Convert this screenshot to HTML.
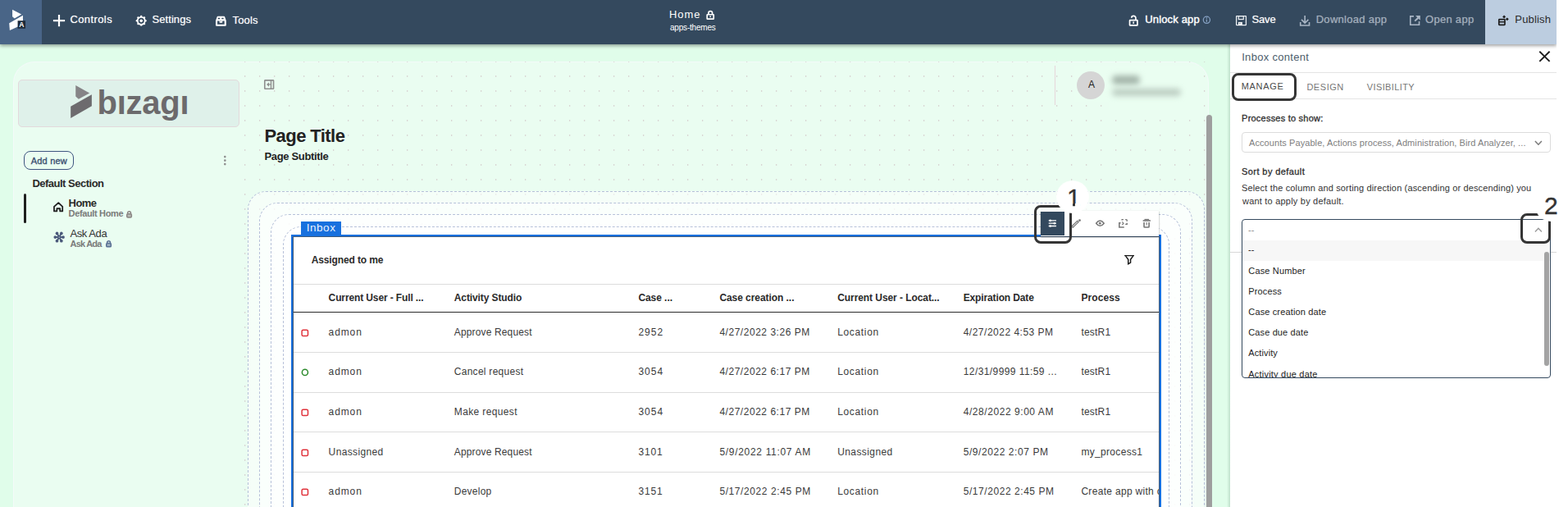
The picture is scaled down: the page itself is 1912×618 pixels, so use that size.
<!DOCTYPE html>
<html lang="en">
<head>
<meta charset="utf-8">
<title>Bizagi Apps Designer - Inbox content</title>
<style>
html,body{margin:0;padding:0;width:1912px;height:618px;overflow:hidden;background:#fff}
body{position:relative;font-family:"Liberation Sans",sans-serif;color:#333}
#root{position:absolute;left:0;top:0;width:1912px;height:618px;overflow:hidden;background:#fff}
.t{position:absolute;white-space:pre;margin:0;padding:0;font-weight:400}
.a{position:absolute}
.g{position:absolute;left:0;top:0;width:0;height:0}
svg{position:absolute;overflow:visible}
#work{position:absolute;left:0;top:54px;width:1500px;height:564px;background:#e0fdea}
#canvas{position:absolute;left:16px;top:75px;width:1458px;height:600px;box-sizing:border-box;border:1px solid rgba(250,246,255,.6);border-radius:26px;background:rgba(255,255,255,.32)}
#dots{position:absolute;left:294px;top:75px}
.db{position:absolute;box-sizing:border-box;border:1px dashed #b6c1d9;border-radius:22px;background:rgba(255,255,255,.5);height:500px}
#logo{position:absolute;left:22px;top:97px;width:270px;height:58px;box-sizing:border-box;border:1px solid #e3d9dc;border-radius:5px;background:#dff1ea}
#nav{position:absolute;left:0;top:0;width:1898px;height:54px;background:#34495e;box-shadow:0 2px 4px rgba(0,0,0,.36)}
#navlogo{position:absolute;left:0;top:0;width:51px;height:54px;background:#496587}
#publish{position:absolute;left:1811px;top:0;width:87px;height:54px;background:#bccde0}
#panel{position:absolute;left:1500px;top:54px;width:398px;height:564px;background:#fff}
#pshadow{position:absolute;left:1496px;top:54px;width:4px;height:564px;background:linear-gradient(90deg,rgba(60,110,80,0),rgba(60,110,80,.2))}
#clip{position:absolute;left:0;top:0;width:1898px;height:70px;overflow:hidden;pointer-events:none}
.hl{position:absolute;box-sizing:border-box;border:3.4px solid #353535;border-radius:8px}
.halo{position:absolute;border-radius:50%;background:radial-gradient(circle,#fff 0,#fff 66%,rgba(255,255,255,0) 100%)}
.line{position:absolute;height:1px;background:#ddd}
</style>
</head>
<body>
<div id="root">

<div id="work"></div>
<div id="canvas"></div>
<svg id="dots" width="1179" height="543" aria-hidden="true"><defs><pattern id="dp" x="-4" y="-9" width="18" height="18" patternUnits="userSpaceOnUse"><rect x="8" y="8.3" width="1.3" height="1.3" fill="#c2a3ac" fill-opacity=".66"/></pattern></defs><rect width="1179" height="543" fill="url(#dp)"/></svg>

<!-- ======================= sidebar ======================= -->
<aside class="g" aria-label="App navigation">
<div id="logo"></div>
<svg style="left:80px;top:98px" width="160" height="56" viewBox="0 0 1766 618"><path d="M135 65 322 170 175 252 135 216z" fill="#868487"/><path d="M352 190V346L68 507V350z" fill="#6d6b6e"/></svg>
<span class="t" style="left:118.5px;top:101px;font-size:40px;line-height:48px;font-weight:700;color:#6c6a6c;letter-spacing:-0.24px;">bizagi</span>
<div class="a" style="left:144px;top:106px;width:9px;height:9px;background:#dff1ea"></div><div class="a" style="left:220px;top:106px;width:10px;height:9px;background:#dff1ea"></div>
<div class="a" style="left:29px;top:184px;width:61px;height:23px;box-sizing:border-box;border:1px solid #3e5580;border-radius:8px"></div>
<svg style="left:272px;top:189px" width="5" height="13" viewBox="0 0 5 13"><circle cx="2.3" cy="2.1" r="1.3" fill="#8c8c8c"/><circle cx="2.3" cy="6.6" r="1.3" fill="#8c8c8c"/><circle cx="2.3" cy="11.1" r="1.3" fill="#8c8c8c"/></svg>
<svg style="left:56px;top:240px" width="30" height="25" viewBox="0 0 742 618"><path d="M378 176 247 292V430H330V352H425V430H500V292z" fill="none" stroke="#1f1f1f" stroke-width="44" stroke-linejoin="round"/></svg>
<svg style="left:154.1px;top:256.5px" width="7.1" height="8.7" viewBox="0 0 7.1 8.7"><path d="M1.63 3.65V2.67A1.92 1.92 0 0 1 5.47 2.67V3.65" fill="none" stroke="#8a8583" stroke-width="1.5"/><rect x="0.75" y="3.65" width="5.6" height="4.30" rx="1.2" fill="#8a8583" fill-opacity=".55" stroke="#8a8583" stroke-width="1.5"/></svg>
<svg style="left:129px;top:293.4px" width="7.1" height="8.6" viewBox="0 0 7.1 8.6"><path d="M1.63 3.61V2.67A1.92 1.92 0 0 1 5.47 2.67V3.61" fill="none" stroke="#586f93" stroke-width="1.5"/><rect x="0.75" y="3.61" width="5.6" height="4.24" rx="1.2" fill="#586f93" fill-opacity=".55" stroke="#586f93" stroke-width="1.5"/></svg>
<svg style="left:56px;top:277px" width="30" height="25" viewBox="0 0 742 618"><path d="M400 298L520 298" stroke="#4b5a7b" stroke-width="50"/><circle cx="520" cy="298" r="46" fill="#4b5a7b"/><path d="M400 298L466 412" stroke="#4b5a7b" stroke-width="50"/><circle cx="466" cy="412" r="46" fill="#4b5a7b"/><path d="M400 298L334 412" stroke="#4b5a7b" stroke-width="50"/><circle cx="334" cy="412" r="46" fill="#4b5a7b"/><path d="M400 298L280 298" stroke="#4b5a7b" stroke-width="50"/><circle cx="280" cy="298" r="46" fill="#4b5a7b"/><path d="M400 298L334 184" stroke="#4b5a7b" stroke-width="50"/><circle cx="334" cy="184" r="46" fill="#4b5a7b"/><path d="M400 298L466 184" stroke="#4b5a7b" stroke-width="50"/><circle cx="466" cy="184" r="46" fill="#4b5a7b"/><circle cx="400" cy="298" r="16" fill="#e4f5ee"/></svg>
<div class="a" style="left:29px;top:236px;width:3px;height:36px;background:#1f1f1f;border-radius:2px"></div>
<span class="t" style="left:37.7px;top:190px;font-size:11px;line-height:13px;color:#3a4f70;letter-spacing:0.22px;-webkit-text-stroke:0.35px #3a4f70;">Add new</span>
<span class="t" style="left:39.4px;top:216px;font-size:13px;line-height:16px;font-weight:700;color:#2a2a2a;letter-spacing:-0.5px;">Default Section</span>
<span class="t" style="left:83.6px;top:240px;font-size:13px;line-height:16px;font-weight:700;color:#2a2a2a;letter-spacing:-0.6px;">Home</span>
<span class="t" style="left:83.6px;top:254px;font-size:11px;line-height:13px;font-weight:700;color:#7a7a7a;letter-spacing:-0.36px;">Default Home</span>
<span class="t" style="left:85.5px;top:277px;font-size:13px;line-height:16px;letter-spacing:-0.43px;">Ask Ada</span>
<span class="t" style="left:85.5px;top:291px;font-size:11px;line-height:13px;font-weight:700;color:#7a7a7a;letter-spacing:-0.78px;">Ask Ada</span>
</aside>

<!-- ======================= main canvas ======================= -->
<main class="g">
<svg style="left:313px;top:90px" width="30" height="25" viewBox="0 0 742 618"><rect x="242" y="195" width="266" height="255" rx="14" fill="none" stroke="#8f8f8f" stroke-width="40"/><path d="M432 195V450" stroke="#8f8f8f" stroke-width="36"/><path d="M298 320 372 252V388z" fill="#8f8f8f"/><path d="M360 320H420" stroke="#8f8f8f" stroke-width="30"/></svg>
<div class="a" style="left:1310px;top:80px;width:153px;height:44px;background:#eafef1"></div><div class="a" style="left:1352px;top:120px;width:111px;height:14px;background:#eafef1"></div>
<div class="a" style="left:1286px;top:80px;width:1px;height:48px;background:#e6d6da"></div>
<div class="a" style="left:1313px;top:87px;width:34px;height:34px;border-radius:50%;background:#d5d5d5"></div>
<div class="a" style="left:1356px;top:91.5px;width:34px;height:11px;border-radius:5px;background:#a4b5aa;filter:blur(3.5px)"></div>
<div class="a" style="left:1356px;top:108px;width:84px;height:9px;border-radius:5px;background:#bccdc2;filter:blur(3.5px)"></div>

<div class="db" style="left:302px;top:233px;width:1167px"></div>
<div class="db" style="left:316px;top:247px;width:1138px"></div>
<div class="db" style="left:330px;top:261px;width:1110px"></div>
<div class="db" style="left:345px;top:276px;width:1081px"></div>

<section class="g" aria-label="Inbox">
<div class="a" style="left:355px;top:286px;width:1061px;height:400px;box-sizing:border-box;border:2px solid #1870de;background:#fff"></div>
<div class="a" style="left:357px;top:288px;width:1057px;height:400px;box-sizing:border-box;border:1px solid #3f5a7a"></div>
<div class="a" style="left:367px;top:270px;width:49px;height:17px;background:#1870de"></div>
<div class="a" style="left:0;top:0;width:1413px;height:618px;overflow:hidden">
<div class="line" style="left:358px;top:346px;width:1055px;background:#dcdcdc"></div>
<div class="line" style="left:358px;top:380px;width:1055px;background:#2b2b2b"></div>
<div class="line" style="left:358px;top:429px;width:1055px"></div>
<div class="line" style="left:358px;top:478px;width:1055px"></div>
<div class="line" style="left:358px;top:526px;width:1055px"></div>
<div class="line" style="left:358px;top:575px;width:1055px"></div>
<svg style="left:1362px;top:304px" width="30" height="25" viewBox="0 0 742 618"><path d="M225 188H520" stroke="#161616" stroke-width="30"/><path d="M262 200 340 305V440L410 400V305L486 200" fill="none" stroke="#161616" stroke-width="36" stroke-linejoin="miter"/></svg>
<svg style="left:367.2px;top:400.7px" width="10" height="10" viewBox="0 0 10 10"><rect x="1.1" y="1.2" width="7.4" height="7.3" rx="1.6" fill="none" stroke="#e0333c" stroke-width="1.5"/></svg>
<svg style="left:367.2px;top:449.3px" width="10" height="10" viewBox="0 0 10 10"><circle cx="4.9" cy="4.9" r="3.55" fill="none" stroke="#2c8a2c" stroke-width="1.5"/></svg>
<svg style="left:367.2px;top:497.8px" width="10" height="10" viewBox="0 0 10 10"><rect x="1.1" y="1.2" width="7.4" height="7.3" rx="1.6" fill="none" stroke="#e0333c" stroke-width="1.5"/></svg>
<svg style="left:367.2px;top:546.8px" width="10" height="10" viewBox="0 0 10 10"><rect x="1.1" y="1.2" width="7.4" height="7.3" rx="1.6" fill="none" stroke="#e0333c" stroke-width="1.5"/></svg>
<svg style="left:367.2px;top:595.2px" width="10" height="10" viewBox="0 0 10 10"><rect x="1.1" y="1.2" width="7.4" height="7.3" rx="1.6" fill="none" stroke="#e0333c" stroke-width="1.5"/></svg>
<span class="t" style="left:379.7px;top:310px;font-size:12px;line-height:14px;font-weight:700;color:#2a2a2a;letter-spacing:-0.12px;">Assigned to me</span>
<span class="t" style="left:400.6px;top:356px;font-size:12px;line-height:14px;font-weight:700;color:#2a2a2a;letter-spacing:-0.12px;">Current User - Full ...</span>
<span class="t" style="left:553.8px;top:356px;font-size:12px;line-height:14px;font-weight:700;color:#2a2a2a;letter-spacing:-0.11px;">Activity Studio</span>
<span class="t" style="left:778.4px;top:356px;font-size:12px;line-height:14px;font-weight:700;color:#2a2a2a;letter-spacing:-0.06px;">Case ...</span>
<span class="t" style="left:877.4px;top:356px;font-size:12px;line-height:14px;font-weight:700;color:#2a2a2a;letter-spacing:-0.06px;">Case creation ...</span>
<span class="t" style="left:1021.2px;top:356px;font-size:12px;line-height:14px;font-weight:700;color:#2a2a2a;letter-spacing:-0.07px;">Current User - Locat...</span>
<span class="t" style="left:1174.7px;top:356px;font-size:12px;line-height:14px;font-weight:700;color:#2a2a2a;letter-spacing:-0.13px;">Expiration Date</span>
<span class="t" style="left:1318.4px;top:356px;font-size:12px;line-height:14px;font-weight:700;color:#2a2a2a;letter-spacing:0.1px;">Process</span>
<span class="t" style="left:400.6px;top:398px;font-size:12px;line-height:14px;color:#3a3a3a;letter-spacing:0.88px;">admon</span>
<span class="t" style="left:553.8px;top:398px;font-size:12px;line-height:14px;color:#3a3a3a;letter-spacing:0.14px;">Approve Request</span>
<span class="t" style="left:778.4px;top:398px;font-size:12px;line-height:14px;color:#3a3a3a;letter-spacing:1.0px;">2952</span>
<span class="t" style="left:877.4px;top:398px;font-size:12px;line-height:14px;color:#3a3a3a;letter-spacing:0.53px;">4/27/2022 3:26 PM</span>
<span class="t" style="left:1021.2px;top:398px;font-size:12px;line-height:14px;color:#3a3a3a;letter-spacing:0.66px;">Location</span>
<span class="t" style="left:1174.7px;top:398px;font-size:12px;line-height:14px;color:#3a3a3a;letter-spacing:0.5px;">4/27/2022 4:53 PM</span>
<span class="t" style="left:1318.4px;top:398px;font-size:12px;line-height:14px;color:#3a3a3a;letter-spacing:0.2px;">testR1</span>
<span class="t" style="left:400.6px;top:446px;font-size:12px;line-height:14px;color:#3a3a3a;letter-spacing:0.88px;">admon</span>
<span class="t" style="left:553.8px;top:446px;font-size:12px;line-height:14px;color:#3a3a3a;letter-spacing:0.27px;">Cancel request</span>
<span class="t" style="left:778.4px;top:446px;font-size:12px;line-height:14px;color:#3a3a3a;letter-spacing:1.0px;">3054</span>
<span class="t" style="left:877.4px;top:446px;font-size:12px;line-height:14px;color:#3a3a3a;letter-spacing:0.53px;">4/27/2022 6:17 PM</span>
<span class="t" style="left:1021.2px;top:446px;font-size:12px;line-height:14px;color:#3a3a3a;letter-spacing:0.66px;">Location</span>
<span class="t" style="left:1174.7px;top:446px;font-size:12px;line-height:14px;color:#3a3a3a;letter-spacing:0.42px;">12/31/9999 11:59 ...</span>
<span class="t" style="left:1318.4px;top:446px;font-size:12px;line-height:14px;color:#3a3a3a;letter-spacing:0.2px;">testR1</span>
<span class="t" style="left:400.6px;top:495px;font-size:12px;line-height:14px;color:#3a3a3a;letter-spacing:0.88px;">admon</span>
<span class="t" style="left:553.8px;top:495px;font-size:12px;line-height:14px;color:#3a3a3a;letter-spacing:0.36px;">Make request</span>
<span class="t" style="left:778.4px;top:495px;font-size:12px;line-height:14px;color:#3a3a3a;letter-spacing:1.0px;">3054</span>
<span class="t" style="left:877.4px;top:495px;font-size:12px;line-height:14px;color:#3a3a3a;letter-spacing:0.53px;">4/27/2022 6:17 PM</span>
<span class="t" style="left:1021.2px;top:495px;font-size:12px;line-height:14px;color:#3a3a3a;letter-spacing:0.66px;">Location</span>
<span class="t" style="left:1174.7px;top:495px;font-size:12px;line-height:14px;color:#3a3a3a;letter-spacing:0.56px;">4/28/2022 9:00 AM</span>
<span class="t" style="left:1318.4px;top:495px;font-size:12px;line-height:14px;color:#3a3a3a;letter-spacing:0.2px;">testR1</span>
<span class="t" style="left:400.6px;top:544px;font-size:12px;line-height:14px;color:#3a3a3a;letter-spacing:0.37px;">Unassigned</span>
<span class="t" style="left:553.8px;top:544px;font-size:12px;line-height:14px;color:#3a3a3a;letter-spacing:0.14px;">Approve Request</span>
<span class="t" style="left:778.4px;top:544px;font-size:12px;line-height:14px;color:#3a3a3a;letter-spacing:0.87px;">3101</span>
<span class="t" style="left:877.4px;top:544px;font-size:12px;line-height:14px;color:#3a3a3a;letter-spacing:0.69px;">5/9/2022 11:07 AM</span>
<span class="t" style="left:1021.2px;top:544px;font-size:12px;line-height:14px;color:#3a3a3a;letter-spacing:0.41px;">Unassigned</span>
<span class="t" style="left:1174.7px;top:544px;font-size:12px;line-height:14px;color:#3a3a3a;letter-spacing:0.57px;">5/9/2022 2:07 PM</span>
<span class="t" style="left:1318.4px;top:544px;font-size:12px;line-height:14px;color:#3a3a3a;letter-spacing:0.32px;">my_process1</span>
<span class="t" style="left:400.6px;top:592px;font-size:12px;line-height:14px;color:#3a3a3a;letter-spacing:0.88px;">admon</span>
<span class="t" style="left:553.8px;top:592px;font-size:12px;line-height:14px;color:#3a3a3a;letter-spacing:0.23px;">Develop</span>
<span class="t" style="left:778.4px;top:592px;font-size:12px;line-height:14px;color:#3a3a3a;letter-spacing:0.87px;">3151</span>
<span class="t" style="left:877.4px;top:592px;font-size:12px;line-height:14px;color:#3a3a3a;letter-spacing:0.59px;">5/17/2022 2:45 PM</span>
<span class="t" style="left:1021.2px;top:592px;font-size:12px;line-height:14px;color:#3a3a3a;letter-spacing:0.66px;">Location</span>
<span class="t" style="left:1174.7px;top:592px;font-size:12px;line-height:14px;color:#3a3a3a;letter-spacing:0.56px;">5/17/2022 2:45 PM</span>
<span class="t" style="left:1318.4px;top:592px;font-size:12px;line-height:14px;color:#3a3a3a;letter-spacing:0.31px;">Create app with c</span>
</div>
</section>

<!-- widget toolbar -->
<div class="a" style="left:1269px;top:257px;width:144px;height:31px;background:#fff;box-shadow:0 1px 2px rgba(0,0,0,.42)"></div>
<div class="a" style="left:1269px;top:258px;width:29px;height:29px;background:#34495e"></div>
<svg style="left:1270px;top:258px" width="30" height="25" viewBox="0 0 742 618"><path d="M215 270H445M215 350H445M215 432H445" stroke="#fff" stroke-width="34"/><circle cx="265" cy="268" r="32" fill="#fff"/><circle cx="392" cy="352" r="32" fill="#fff"/><circle cx="265" cy="434" r="32" fill="#fff"/></svg>
<svg style="left:1300px;top:258px" width="60" height="25" viewBox="0 0 1483 618"><path d="M202 479 168 445 341 278 375 312z" fill="#fff" stroke="#777" stroke-width="30" stroke-linejoin="round"/><circle cx="408" cy="262" r="36" fill="#777"/><path d="M905 350Q1022 198 1142 350Q1022 502 905 350z" fill="none" stroke="#777" stroke-width="38" stroke-linejoin="round"/><circle cx="1020" cy="350" r="36" fill="#777"/></svg>
<svg style="left:1356px;top:258px" width="60" height="25" viewBox="0 0 1483 618"><path d="M262 340H218V468H365" fill="none" stroke="#777" stroke-width="38"/><path d="M300 262V238H345M400 238H430Q450 238 450 258V290M450 340V380H400" fill="none" stroke="#777" stroke-width="36"/><path d="M305 305 345 350 305 398" fill="none" stroke="#777" stroke-width="30"/><path d="M930 272H1160" stroke="#777" stroke-width="40"/><path d="M975 236H1115" stroke="#777" stroke-width="34"/><path d="M965 320V450Q965 470 985 470H1095Q1115 470 1115 450V320" fill="none" stroke="#777" stroke-width="40"/><path d="M1042 322V410" stroke="#777" stroke-width="28"/></svg>
<div class="hl" style="left:1261px;top:250px;width:46px;height:47px"></div>
<div class="halo" style="left:1288px;top:220px;width:40px;height:40px"></div>
<span class="t" style="left:322.5px;top:153px;font-size:22px;line-height:26px;font-weight:700;color:#222;letter-spacing:-0.57px;">Page Title</span>
<span class="t" style="left:322.5px;top:183px;font-size:13px;line-height:16px;font-weight:700;color:#222;letter-spacing:-0.34px;">Page Subtitle</span>
<span class="t" style="left:1326.9px;top:96px;font-size:12px;line-height:14px;color:#222;">A</span>
<span class="t" style="left:373.7px;top:270px;font-size:13.5px;line-height:16px;color:#eaf2fd;letter-spacing:0.55px;">Inbox</span>
<span class="t" style="left:1301.1px;top:223px;font-size:30px;line-height:36px;-webkit-text-stroke:0.35px #333;">1</span>
<div class="a" style="left:1300px;top:248.2px;width:7.9px;height:3.4px;background:#fff"></div><div class="a" style="left:1311.2px;top:248.2px;width:6px;height:3.4px;background:#fff"></div>

<div class="a" style="left:1471px;top:140px;width:7px;height:500px;border-radius:4px;background:#9e9e9e"></div>
</main>

<!-- ======================= right panel ======================= -->
<div id="pshadow"></div>
<aside id="panel"></aside>
<section class="g" aria-label="Inbox content">
<div class="line" style="left:1500px;top:88px;width:398px;background:#e4e4e4"></div>
<div class="line" style="left:1500px;top:120px;width:398px;background:#e4e4e4"></div>
<div class="line" style="left:1500px;top:307px;width:398px;background:#d8d8d8"></div>
<div class="hl" style="left:1502px;top:89px;width:79px;height:34px"></div>
<div class="a" style="left:1514px;top:161px;width:377px;height:25px;box-sizing:border-box;border:1px solid #dcdcdc;border-radius:4px;background:#fff"></div>
<!-- open dropdown -->
<div class="a" style="left:1514px;top:267px;width:377px;height:194px;box-sizing:border-box;border:1px solid #34495e;border-radius:4px;background:#fff"></div>
<div class="a" style="left:1515px;top:293px;width:375px;height:25px;background:#f7f7f7"></div>
<div class="a" style="left:1883px;top:307px;width:6px;height:139px;border-radius:3px;background:#a3a3a3"></div>
<div class="a" style="left:0;top:0;width:1898px;height:460px;overflow:hidden">
<span class="t" style="left:1522.0px;top:274px;font-size:11px;line-height:13px;color:#8a8a8a;">--</span>
<span class="t" style="left:1522.0px;top:298px;font-size:11px;line-height:13px;color:#222;">--</span>
<span class="t" style="left:1522.3px;top:324px;font-size:11px;line-height:13px;color:#222;letter-spacing:0.15px;">Case Number</span>
<span class="t" style="left:1522.3px;top:349px;font-size:11px;line-height:13px;color:#222;letter-spacing:0.12px;">Process</span>
<span class="t" style="left:1522.3px;top:374px;font-size:11px;line-height:13px;color:#222;letter-spacing:0.14px;">Case creation date</span>
<span class="t" style="left:1522.3px;top:399px;font-size:11px;line-height:13px;color:#222;letter-spacing:0.12px;">Case due date</span>
<span class="t" style="left:1522.3px;top:424px;font-size:11px;line-height:13px;color:#222;letter-spacing:0.1px;">Activity</span>
<span class="t" style="left:1522.3px;top:450px;font-size:11px;line-height:13px;color:#222;letter-spacing:0.21px;">Activity due date</span>
</div>
<svg style="left:1876px;top:62px" width="15" height="14" viewBox="0 0 15 14"><path d="M1.3 .8 13.6 12.9M13.6 .8 1.3 12.9" stroke="#1e1e1e" stroke-width="1.9" fill="none"/></svg>
<svg style="left:1870.5px;top:171px" width="10" height="7" viewBox="0 0 10 7"><path d="M.9 1 4.9 5.2 8.9 1" fill="none" stroke="#7a7a7a" stroke-width="1.5"/></svg>
<svg style="left:1870.5px;top:276.5px" width="10" height="7" viewBox="0 0 10 7"><path d="M.9 5.4 4.9 1.3 8.9 5.4" fill="none" stroke="#9a9a9a" stroke-width="1.4"/></svg>
<div class="hl" style="left:1854px;top:260px;width:37px;height:37px"></div>
<div class="halo" style="left:1872px;top:232px;width:38px;height:38px"></div>
<span class="t" style="left:1514.2px;top:62px;font-size:13px;line-height:16px;color:#4d5d6c;letter-spacing:0.3px;">Inbox content</span>
<span class="t" style="left:1513.7px;top:99px;font-size:11px;line-height:13px;color:#4a4a4a;letter-spacing:0.68px;">MANAGE</span>
<span class="t" style="left:1593.4px;top:100px;font-size:11px;line-height:13px;color:#777;letter-spacing:0.54px;">DESIGN</span>
<span class="t" style="left:1666.8px;top:100px;font-size:11px;line-height:13px;color:#777;letter-spacing:0.38px;">VISIBILITY</span>
<span class="t" style="left:1514.1px;top:138px;font-size:11px;line-height:13px;color:#2e2e2e;letter-spacing:0.22px;-webkit-text-stroke:0.3px #2e2e2e;">Processes to show:</span>
<span class="t" style="left:1523.0px;top:168px;font-size:11px;line-height:13px;color:#7e7e7e;letter-spacing:0.08px;">Accounts Payable, Actions process, Administration, Bird Analyzer, ...</span>
<span class="t" style="left:1514.1px;top:203px;font-size:11px;line-height:13px;color:#2e2e2e;letter-spacing:0.41px;-webkit-text-stroke:0.3px #2e2e2e;">Sort by default</span>
<span class="t" style="left:1514.0px;top:223px;font-size:11px;line-height:13px;letter-spacing:0.15px;">Select the column and sorting direction (ascending or descending) you</span>
<span class="t" style="left:1515.0px;top:239px;font-size:11px;line-height:13px;letter-spacing:0.21px;">want to apply by default.</span>
<span class="t" style="left:1882.9px;top:233px;font-size:30px;line-height:36px;-webkit-text-stroke:0.35px #333;">2</span>
</section>

<!-- ======================= top bar ======================= -->
<div id="clip"><header id="nav"><div id="navlogo"></div><div id="publish"></div></header></div>
<nav class="g" aria-label="Designer toolbar">
<svg style="left:5px;top:7px" width="36" height="35" viewBox="0 0 636 618"><path d="M178 85 375 185 225 272 178 235z" fill="#fff"/><path d="M405 208V400L122 530 110 375z" fill="#fff"/><rect x="293" y="322" width="167" height="168" fill="#1d2a39"/><text x="377" y="468" font-family="Liberation Sans,sans-serif" font-size="150" font-weight="700" fill="#fff" text-anchor="middle">A</text></svg>
<svg style="left:64px;top:17px" width="16" height="16" viewBox="0 0 16 16"><path d="M.9 8.2H15.1M8 .9V15.2" stroke="#fff" stroke-width="2.2" fill="none"/></svg>
<svg style="left:160px;top:13px" width="30" height="25" viewBox="0 0 742 618"><circle cx="302" cy="305" r="112" fill="none" stroke="#fff" stroke-width="46"/><circle cx="432" cy="305" r="31" fill="#fff"/><circle cx="394" cy="397" r="31" fill="#fff"/><circle cx="302" cy="435" r="31" fill="#fff"/><circle cx="210" cy="397" r="31" fill="#fff"/><circle cx="172" cy="305" r="31" fill="#fff"/><circle cx="210" cy="213" r="31" fill="#fff"/><circle cx="302" cy="175" r="31" fill="#fff"/><circle cx="394" cy="213" r="31" fill="#fff"/><circle cx="302" cy="305" r="45" fill="#fff"/></svg>
<svg style="left:255px;top:13px" width="30" height="25" viewBox="0 0 742 618"><path fill-rule="evenodd" fill="#fff" d="M198 300 236 190Q242 168 266 168H446Q470 168 476 190L514 300V440Q514 466 488 466H224Q198 466 198 440zM266 218H324V254H266zM378 218H436V254H378zM250 310H312V362H400V310H462V412H250z"/><rect x="336" y="300" width="36" height="14" fill="#34495e"/></svg>
<svg style="left:852px;top:6px" width="30" height="25" viewBox="0 0 742 618"><path d="M296 285V240A57 52 0 0 1 410 240V285" fill="none" stroke="#fff" stroke-width="42"/><rect x="253" y="291" width="198" height="133" rx="12" fill="none" stroke="#fff" stroke-width="42"/><circle cx="352" cy="352" r="22" fill="#fff"/></svg>
<svg style="left:1368px;top:13px" width="30" height="25" viewBox="0 0 742 618"><path d="M292 218V215A62 55 0 0 1 418 215V270" fill="none" stroke="#fff" stroke-width="42"/><rect x="236" y="289" width="233" height="155" rx="12" fill="none" stroke="#fff" stroke-width="42"/><rect x="332" y="325" width="36" height="72" rx="14" fill="#fff"/></svg>
<svg style="left:1466px;top:19px" width="11" height="11" viewBox="0 0 11 11"><circle cx="5.4" cy="5.3" r="4.1" fill="none" stroke="#86a1c3" stroke-width="1.25"/><path d="M5.4 4.6V7.8" stroke="#86a1c3" stroke-width="1.3"/><circle cx="5.4" cy="3.1" r=".8" fill="#86a1c3"/></svg>
<svg style="left:1498px;top:13px" width="30" height="25" viewBox="0 0 742 618"><rect x="238" y="164" width="292" height="272" rx="10" fill="none" stroke="#e9edf1" stroke-width="32"/><rect x="304" y="164" width="148" height="96" fill="none" stroke="#e9edf1" stroke-width="30"/><rect x="296" y="345" width="120" height="95" fill="#fff"/><rect x="322" y="368" width="40" height="30" fill="#8a98a8"/></svg>
<svg style="left:1576px;top:13px" width="30" height="25" viewBox="0 0 742 618"><path d="M375 150V370M272 268 375 372 480 268" fill="none" stroke="#a9b5c4" stroke-width="40"/><path d="M240 345V445H508V345" fill="none" stroke="#a9b5c4" stroke-width="40"/></svg>
<svg style="left:1710px;top:13px" width="30" height="25" viewBox="0 0 742 618"><path d="M345 170H242V425H508V320" fill="none" stroke="#a9b5c4" stroke-width="40"/><path d="M398 150H540V292L492 244 392 330 360 298 452 205z" fill="#a9b5c4"/></svg>
<svg style="left:1818px;top:13px" width="30" height="25" viewBox="0 0 742 618"><rect x="242" y="265" width="178" height="165" rx="16" fill="none" stroke="#1e1e1e" stroke-width="42"/><path d="M242 340H420" stroke="#1e1e1e" stroke-width="36"/><path d="M398 138 446 185 398 232 350 185z" fill="#1e1e1e"/><path d="M490 208 538 255 490 302 442 255z" fill="#1e1e1e"/></svg>
<span class="t" style="left:85.4px;top:16px;font-size:13px;line-height:16px;color:#fff;letter-spacing:0.41px;text-shadow:0 0 1px rgba(255,255,255,.55);">Controls</span>
<span class="t" style="left:185.5px;top:16px;font-size:13px;line-height:16px;color:#fff;letter-spacing:0.07px;text-shadow:0 0 1px rgba(255,255,255,.55);">Settings</span>
<span class="t" style="left:283.5px;top:17px;font-size:13px;line-height:16px;color:#fff;letter-spacing:0.17px;text-shadow:0 0 1px rgba(255,255,255,.55);">Tools</span>
<span class="t" style="left:816.0px;top:10px;font-size:13px;line-height:16px;color:#fff;letter-spacing:0.9px;">Home</span>
<span class="t" style="left:817.0px;top:28px;font-size:10px;line-height:12px;color:#fff;letter-spacing:-0.2px;">apps-themes</span>
<span class="t" style="left:1396.2px;top:16px;font-size:13px;line-height:16px;color:#fff;letter-spacing:0.16px;-webkit-text-stroke:0.4px #fff;">Unlock app</span>
<span class="t" style="left:1526.6px;top:16px;font-size:13px;line-height:16px;color:#fff;letter-spacing:-0.2px;text-shadow:0 0 1px rgba(255,255,255,.55);">Save</span>
<span class="t" style="left:1604.7px;top:16px;font-size:13px;line-height:16px;color:#a3afbc;letter-spacing:0.29px;text-shadow:0 0 1px rgba(163,175,188,.6);">Download app</span>
<span class="t" style="left:1738.0px;top:16px;font-size:13px;line-height:16px;color:#a3afbc;letter-spacing:0.29px;text-shadow:0 0 1px rgba(163,175,188,.6);">Open app</span>
<span class="t" style="left:1847.3px;top:16px;font-size:13px;line-height:16px;color:#2b2b2b;letter-spacing:0.18px;">Publish</span>
</nav>

</div>
</body>
</html>
